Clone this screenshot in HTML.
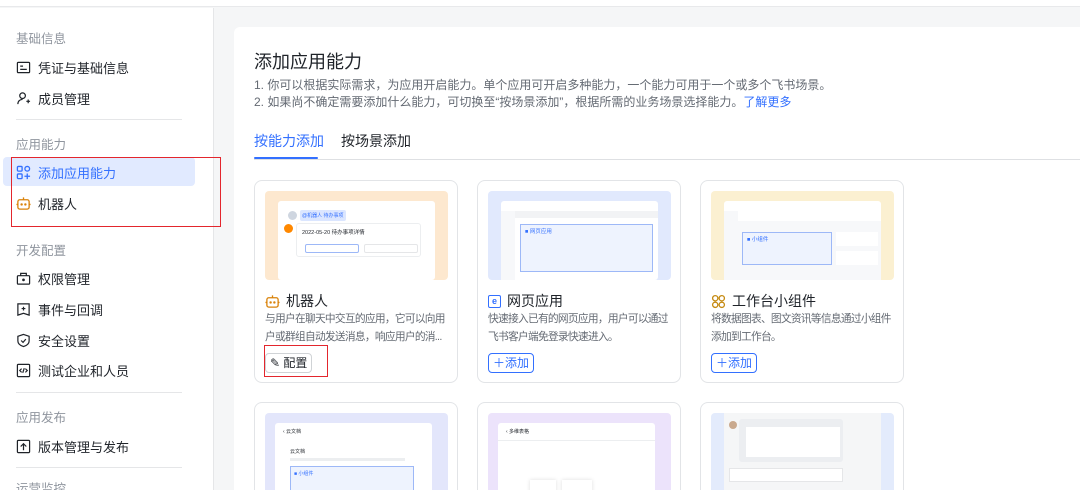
<!DOCTYPE html>
<html style="width:1080px;height:490px;overflow:hidden"><head><meta charset="utf-8"><style>
*{margin:0;padding:0;box-sizing:border-box}
body{width:1080px;height:490px;overflow:hidden;background:#f5f6f7;font-family:"Liberation Sans","Noto Sans CJK SC",sans-serif;color:#1f2329;position:relative}
.a{position:absolute}
.top{left:0;top:0;width:1080px;height:7px;background:#fff;border-bottom:1px solid #e8e9eb}
.side{left:0;top:8px;width:214px;height:482px;background:#fff;border-right:1px solid #e5e6e8}
.lab{left:16px;font-size:12.5px;color:#8f959e}
.it{left:16px;font-size:13px;color:#1f2329;display:flex;align-items:center;gap:7px;height:20px}
.it svg{width:15px;height:15px}
.div{left:16px;width:166px;height:1px;background:#e5e6e8}
.main{left:234px;top:27px;width:846px;height:463px;background:#fff;border-radius:6px 0 0 0}
.card{width:204px;height:203px;border:1px solid #e2e4e7;border-radius:8px;background:#fff;overflow:hidden}
.card.b{height:88px;border-bottom:none;border-radius:8px 8px 0 0}
.img{left:10px;top:10px;width:183px;height:89px;border-radius:4px;overflow:hidden}
.ct{left:10px;top:110px;font-size:14px;display:flex;align-items:center;gap:6px}
.cd{left:10px;top:130px;width:192px;font-size:10.7px;letter-spacing:-0.7px;line-height:17.5px;color:#646a73;height:35px;overflow:hidden;white-space:nowrap}
.btn{left:10px;top:172px;height:20px;border:1px solid #3370ff;border-radius:4px;font-size:12px;color:#3370ff;padding:0 4px;line-height:18px}
.win{background:#fff;border-radius:3px}
</style></head><body>
<div class="a top"></div>
<div class="a side"></div>
<div class="a lab" style="top:28px">基础信息</div>
<div class="a it" style="top:57px"><svg viewBox="0 0 16 16" fill="none" stroke="#1f2329" stroke-width="1.3"><rect x="1.5" y="2.5" width="13" height="11" rx="1"/><path d="M4.5 6.5h3M4.5 10h7"/></svg>凭证与基础信息</div>
<div class="a it" style="top:88px"><svg viewBox="0 0 16 16" fill="none" stroke="#1f2329" stroke-width="1.3"><circle cx="7" cy="5" r="3"/><path d="M2 14c0-3 2-5 5-5M11 11h4M13 9v4"/></svg>成员管理</div>
<div class="a div" style="top:119px"></div>
<div class="a lab" style="top:134px">应用能力</div>
<div class="a" style="left:3px;top:157px;width:192px;height:29px;background:#e1eaff;border-radius:4px"></div>
<div class="a it" style="top:162px;color:#3370ff"><svg viewBox="0 0 16 16" fill="none" stroke="#3370ff" stroke-width="1.4"><rect x="1.5" y="1.5" width="5" height="5" rx="1"/><rect x="9.5" y="1.5" width="5" height="5" rx="2.5"/><rect x="1.5" y="9.5" width="5" height="5" rx="1"/><path d="M12 9v6M9 12h6"/></svg>添加应用能力</div>
<div class="a it" style="top:193px"><svg viewBox="0 0 16 16" fill="none" stroke="#d9820a" stroke-width="1.4"><rect x="2" y="4" width="12" height="10" rx="2"/><path d="M8 1.5v2.5M0.5 9h1.5M14 9h1.5"/><circle cx="6" cy="9" r=".6" fill="#d9820a"/><circle cx="10" cy="9" r=".6" fill="#d9820a"/></svg>机器人</div>
<div class="a" style="left:11px;top:157px;width:210px;height:70px;border:1.5px solid #e3262d"></div>
<div class="a lab" style="top:240px">开发配置</div>
<div class="a it" style="top:268px"><svg viewBox="0 0 16 16" fill="none" stroke="#1f2329" stroke-width="1.3"><rect x="1.5" y="5" width="13" height="9" rx="1"/><path d="M5 5V2.5h6V5"/><circle cx="8" cy="9.5" r=".8" fill="#1f2329"/></svg>权限管理</div>
<div class="a it" style="top:299px"><svg viewBox="0 0 16 16" fill="none" stroke="#1f2329" stroke-width="1.3"><path d="M2 2h12v12l-6-2-6 2z"/><path d="M8 5v4M6 7h4"/></svg>事件与回调</div>
<div class="a it" style="top:330px"><svg viewBox="0 0 16 16" fill="none" stroke="#1f2329" stroke-width="1.3"><path d="M8 1.5l6 2v5c0 3-3 5-6 6-3-1-6-3-6-6v-5z"/><path d="M5.5 8l2 2 3-3.5"/></svg>安全设置</div>
<div class="a it" style="top:360px"><svg viewBox="0 0 16 16" fill="none" stroke="#1f2329" stroke-width="1.3"><rect x="1.5" y="1.5" width="13" height="13" rx="1"/><path d="M6 6l-2 2 2 2M10 6l2 2-2 2M8.8 5.5l-1.6 5"/></svg>测试企业和人员</div>
<div class="a div" style="top:392px"></div>
<div class="a lab" style="top:407px">应用发布</div>
<div class="a it" style="top:436px"><svg viewBox="0 0 16 16" fill="none" stroke="#1f2329" stroke-width="1.3"><rect x="1.5" y="1.5" width="13" height="13" rx="1"/><path d="M8 12V5M5 8l3-3 3 3"/></svg>版本管理与发布</div>
<div class="a div" style="top:467px"></div>
<div class="a lab" style="top:478px;height:12px;overflow:hidden">运营监控</div>

<div class="a main"></div>
<div class="a" style="left:254px;top:48px;font-size:18px">添加应用能力</div>
<div class="a" style="left:254px;top:77px;font-size:12px;color:#646a73;line-height:17px;white-space:nowrap">1. 你可以根据实际需求，为应用开启能力。单个应用可开启多种能力，一个能力可用于一个或多个飞书场景。<br>2. 如果尚不确定需要添加什么能力，可切换至“按场景添加”，根据所需的业务场景选择能力。<span style="color:#3370ff">了解更多</span></div>
<div class="a" style="left:254px;top:131px;font-size:14px;color:#3370ff">按能力添加</div>
<div class="a" style="left:341px;top:131px;font-size:14px">按场景添加</div>
<div class="a" style="left:254px;top:159px;width:826px;height:1px;background:#dee0e3"></div>
<div class="a" style="left:254px;top:157px;width:64px;height:2px;background:#3370ff;border-radius:1px"></div>

<div class="a card" style="left:254px;top:180px">
 <div class="a img" style="background:#fde8cf"><div class="a win" style="left:13px;top:10px;width:157px;height:79px">
  <div class="a" style="left:10px;top:10px;width:9px;height:9px;border-radius:50%;background:#cfd6e0"></div>
  <div class="a" style="left:22px;top:9px;width:46px;height:11px;background:#dbe6ff;border-radius:2px;font-size:5px;color:#3370ff;padding:2px">@机器人 待办事项</div>
  <div class="a" style="left:6px;top:23px;width:9px;height:9px;border-radius:50%;background:#ff8800"></div>
  <div class="a" style="left:18px;top:22px;width:125px;height:34px;border:1px solid #eceef0;border-radius:3px;font-size:5.5px;padding:4px 5px">2022-05-20 待办事项详情</div>
  <div class="a" style="left:27px;top:43px;width:54px;height:9px;border:1px solid #9db8f7;border-radius:2px"></div>
  <div class="a" style="left:86px;top:43px;width:54px;height:9px;border:1px solid #e5e6e8;border-radius:2px"></div>
 </div></div>
 <div class="a ct"><svg width="15" height="15" viewBox="0 0 16 16" fill="none" stroke="#d9820a" stroke-width="1.4"><rect x="2" y="4" width="12" height="10" rx="2"/><path d="M8 1.5v2.5M0.5 9h1.5M14 9h1.5"/><circle cx="6" cy="9" r=".6" fill="#d9820a"/><circle cx="10" cy="9" r=".6" fill="#d9820a"/></svg>机器人</div>
 <div class="a cd">与用户在聊天中交互的应用，它可以向用<br>户或群组自动发送消息，响应用户的消...</div>
 <div class="a btn" style="border-color:#d0d3d6;color:#1f2329">✎ 配置</div>
</div>
<div class="a" style="left:264px;top:345px;width:64px;height:32px;border:1.5px solid #e3262d"></div>

<div class="a card" style="left:477px;top:180px">
 <div class="a img" style="background:#e1e9fd"><div class="a win" style="left:13px;top:10px;width:157px;height:79px">
  <div class="a" style="left:0;top:10px;width:14px;height:69px;background:#f7f8fa"></div>
  <div class="a" style="left:14px;top:10px;width:143px;height:7px;background:#f2f3f5"></div>
  <div class="a" style="left:19px;top:23px;width:133px;height:48px;background:#eef3fe;border:1px solid #9db8f7;font-size:5.5px;color:#3370ff;padding:2px 4px">■ 网页应用</div>
 </div></div>
 <div class="a ct"><span style="display:inline-block;width:13px;height:13px;border:1.5px solid #3370ff;border-radius:2px;font-size:9px;color:#3370ff;text-align:center;line-height:10px;font-weight:bold">e</span>网页应用</div>
 <div class="a cd">快速接入已有的网页应用，用户可以通过<br>飞书客户端免登录快速进入。</div>
 <div class="a btn">＋添加</div>
</div>

<div class="a card" style="left:700px;top:180px">
 <div class="a img" style="background:#fbf0d1"><div class="a win" style="left:13px;top:10px;width:157px;height:79px">
  <div class="a" style="left:0;top:10px;width:14px;height:69px;background:#f7f8fa"></div>
  <div class="a" style="left:14px;top:20px;width:143px;height:59px;background:#f7f8fa"></div>
  <div class="a" style="left:18px;top:31px;width:90px;height:33px;background:#eef3fe;border:1px solid #9db8f7;font-size:5.5px;color:#3370ff;padding:2px 4px">■ 小组件</div>
  <div class="a" style="left:112px;top:31px;width:42px;height:14px;background:#fff"></div>
  <div class="a" style="left:112px;top:50px;width:42px;height:14px;background:#fff"></div>
 </div></div>
 <div class="a ct"><svg width="15" height="15" viewBox="0 0 16 16" fill="none" stroke="#c58a12" stroke-width="1.4"><circle cx="4.5" cy="4.5" r="2.8"/><circle cx="11.5" cy="4.5" r="2.8"/><circle cx="4.5" cy="11.5" r="2.8"/><circle cx="11.5" cy="11.5" r="2.8"/></svg>工作台小组件</div>
 <div class="a cd">将数据图表、图文资讯等信息通过小组件<br>添加到工作台。</div>
 <div class="a btn">＋添加</div>
</div>

<div class="a card b" style="left:254px;top:402px">
 <div class="a img" style="background:#e3e6fb"><div class="a win" style="left:10px;top:10px;width:157px;height:90px">
  <div class="a" style="left:8px;top:5px;font-size:5px">‹ 云文档</div>
  <div class="a" style="left:15px;top:25px;font-size:5px">云文档</div>
  <div class="a" style="left:15px;top:35px;width:115px;height:3px;background:#eceef0"></div>
  <div class="a" style="left:15px;top:43px;width:124px;height:50px;background:#eef3fe;border:1px solid #9db8f7;font-size:5px;color:#3370ff;padding:3px">■ 小组件</div>
 </div></div>
</div>
<div class="a card b" style="left:477px;top:402px">
 <div class="a img" style="background:#ece3fb"><div class="a win" style="left:10px;top:10px;width:157px;height:90px">
  <div class="a" style="left:8px;top:5px;font-size:5px">‹ 多维表格</div>
  <div class="a" style="left:0;top:17px;width:157px;height:1px;background:#eceef0"></div>
  <div class="a" style="left:32px;top:57px;width:26px;height:30px;background:#fff;box-shadow:0 0 4px #ddd"></div>
  <div class="a" style="left:64px;top:57px;width:30px;height:30px;background:#fff;box-shadow:0 0 4px #ddd"></div>
 </div></div>
</div>
<div class="a card b" style="left:700px;top:402px">
 <div class="a img" style="background:#e3ebfc"><div class="a" style="left:13px;top:0;width:157px;height:90px;background:#f5f6f7">
  <div class="a" style="left:5px;top:8px;width:8px;height:8px;border-radius:50%;background:#c9a98e"></div>
  <div class="a" style="left:15px;top:6px;width:104px;height:43px;background:#eceef1;border-radius:3px"></div>
  <div class="a" style="left:22px;top:14px;width:94px;height:30px;background:#fff"></div>
  <div class="a" style="left:5px;top:55px;width:114px;height:14px;background:#fff;border:1px solid #e5e6e8"></div>
 </div></div>
</div>
</body></html>
